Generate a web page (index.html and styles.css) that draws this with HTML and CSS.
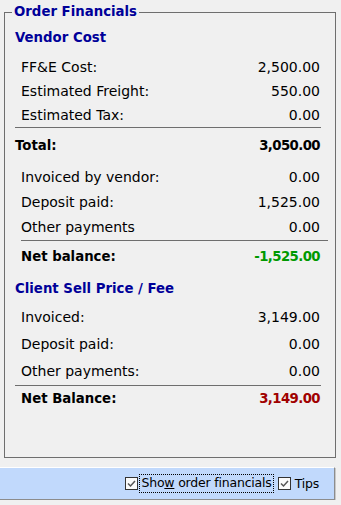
FILE: index.html
```html
<!DOCTYPE html>
<html lang="en">
<head>
    <meta charset="UTF-8">
    <meta name="viewport" content="width=device-width, initial-scale=1.0">
    <link rel="stylesheet" href="styles.css">
    <title>Order Financials</title>
</head>
<body>
    <fieldset class="group">
        <legend>Order Financials</legend>

        <div class="section-title">Vendor Cost</div>
        <div class="lines vendor">
            <div class="row"><span>FF&amp;E Cost:</span><span>2,500.00</span></div>
            <div class="row"><span>Estimated Freight:</span><span>550.00</span></div>
            <div class="row"><span>Estimated Tax:</span><span>0.00</span></div>
        </div>
        <div class="sep"></div>
        <div class="row total"><span>Total:</span><span class="num">3,050.00</span></div>

        <div class="lines payments">
            <div class="row"><span>Invoiced by vendor:</span><span>0.00</span></div>
            <div class="row"><span>Deposit paid:</span><span>1,525.00</span></div>
            <div class="row"><span>Other payments</span><span>0.00</span></div>
        </div>
        <div class="sep sep-wide"></div>
        <div class="row total net"><span>Net balance:</span><span class="num green">-1,525.00</span></div>

        <div class="section-title client">Client Sell Price / Fee</div>
        <div class="lines clientlist">
            <div class="row"><span>Invoiced:</span><span>3,149.00</span></div>
            <div class="row"><span>Deposit paid:</span><span>0.00</span></div>
            <div class="row"><span>Other payments:</span><span>0.00</span></div>
        </div>
        <div class="sep sep-client"></div>
        <div class="row total net2"><span>Net Balance:</span><span class="num red">3,149.00</span></div>
    </fieldset>

    <div class="bottom-bar">
        <label class="check">
            <span class="box"><svg width="11" height="11" viewBox="0 0 11 11"><polyline points="2,5.5 4.5,8 9,3" fill="none" stroke="#555" stroke-width="1.5"/></svg></span>
            <span class="focus">Sho<u>w</u> order financials</span>
        </label>
        <label class="check">
            <span class="box"><svg width="11" height="11" viewBox="0 0 11 11"><polyline points="2,5.5 4.5,8 9,3" fill="none" stroke="#555" stroke-width="1.5"/></svg></span>
            <span class="plain">Tips</span>
        </label>
    </div>
</body>
</html>
```

FILE: styles.css
```css
body {
    font-family: "DejaVu Sans", Verdana, sans-serif;
    font-size: 14px;
    margin: 0;
    padding: 0;
    background-color: #f0f0f0;
    color: #000;
}

/* group box */
.group {
    box-sizing: border-box;
    height: 454px;
    margin: 4px 5px 0 4px;
    padding: 10px 15px 0 10px;
    border: 1px solid #6e6e6e;
    min-width: 0;
}

.group legend {
    margin-left: -3px;
    padding: 0 2px;
    font-size: 13.3px;
    font-weight: bold;
    line-height: 16px;
    color: #000099;
}

.section-title {
    font-size: 13.3px;
    font-weight: bold;
    line-height: 16px;
    color: #000099;
}

.section-title.client {
    margin-top: 16px;
}

.lines {
    display: flex;
    flex-direction: column;
}

.row {
    display: flex;
    justify-content: space-between;
    line-height: 16px;
    padding-left: 6px;
}

.vendor {
    margin-top: 13px;
    gap: 8px;
}

.payments {
    margin-top: 15px;
    gap: 9px;
}

.clientlist {
    margin-top: 12px;
    gap: 11px;
}

.sep {
    height: 1px;
    background-color: #6e6e6e;
    margin: 4px -1px 0 0;
}

.sep-wide {
    margin: 5px -8px 0 6px;
}

.sep-client {
    margin-top: 6px;
}

.total {
    font-size: 13.3px;
    font-weight: bold;
    padding-left: 0;
    margin-top: 10px;
}

.total.net {
    padding-left: 6px;
    margin-top: 8px;
}

.total.net2 {
    padding-left: 6px;
    margin-top: 5px;
}

.num {
    letter-spacing: -0.6px;
}

.green {
    color: #009900;
}

.red {
    color: #a00000;
}

/* bottom bar */
.bottom-bar {
    box-sizing: border-box;
    height: 33px;
    margin: 9px 6px 0 0;
    padding-right: 15px;
    display: flex;
    justify-content: flex-end;
    align-items: center;
    gap: 4px;
    background-color: #c1d9fc;
    border-top: 1px solid #fff;
    border-right: 1px solid #8c8c8c;
    border-bottom: 1px solid #8c8c8c;
    box-shadow: 1px 1px 0 #c8c8c8;
    font-size: 12.5px;
    letter-spacing: -0.2px;
}

.check {
    display: flex;
    align-items: center;
    gap: 1px;
}

.box {
    box-sizing: border-box;
    width: 13px;
    height: 13px;
    border: 1px solid #333;
    background-color: #fafafa;
    display: flex;
    align-items: center;
    justify-content: center;
}

.focus {
    border: 1px dotted #000;
    padding: 1px 1px 2px 1px;
    line-height: 14px;
}

.plain {
    padding-left: 3px;
}
```
